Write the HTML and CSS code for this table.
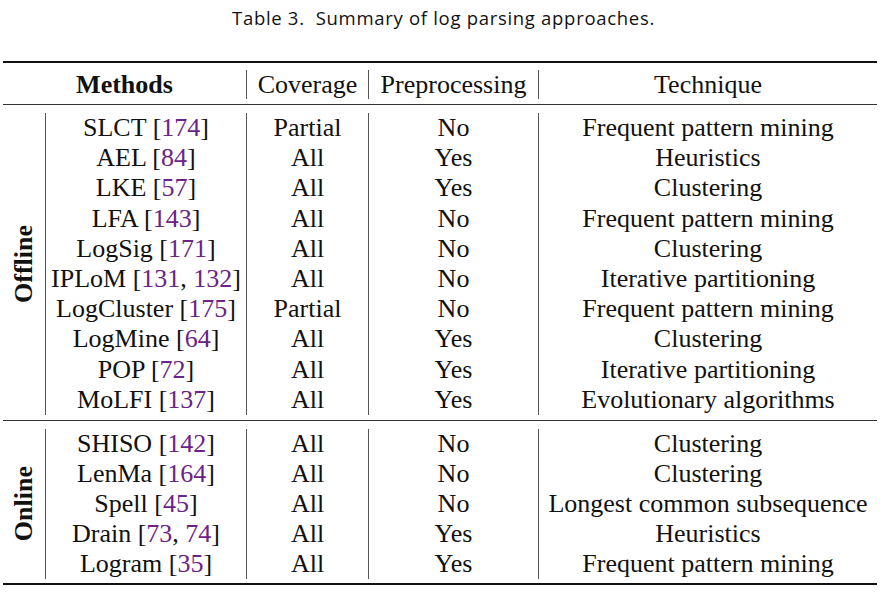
FILE: index.html
```html
<!DOCTYPE html>
<html>
<head>
<meta charset="utf-8">
<link rel="stylesheet" href="styles.css">
</head>
<body>
<div class="caption">Table 3.&nbsp; Summary of log parsing approaches.</div>
<table class="tbl">
  <colgroup>
    <col class="c0"><col class="c1"><col class="c2"><col class="c3"><col class="c4">
  </colgroup>
  <tr class="rule thick"><td colspan="5"></td></tr>
  <tr class="gap g7"><td colspan="5"></td></tr>
  <tr class="head">
    <th colspan="2" class="bold">Methods</th>
    <th class="vl">Coverage</th>
    <th class="vl">Preprocessing</th>
    <th class="vl">Technique</th>
  </tr>
  <tr class="gap g5"><td colspan="5"></td></tr>
  <tr class="rule thin"><td colspan="5"></td></tr>
  <tr class="gap g8"><td colspan="5"></td></tr>

  <tr class="row off">
    <td rowspan="10" class="grp"><div class="rot">Offline</div></td>
    <td class="vl">SLCT [<span class="ref">174</span>]</td><td class="vl">Partial</td><td class="vl">No</td><td class="vl">Frequent pattern mining</td>
  </tr>
  <tr class="row off"><td class="vl">AEL [<span class="ref">84</span>]</td><td class="vl">All</td><td class="vl">Yes</td><td class="vl">Heuristics</td></tr>
  <tr class="row off"><td class="vl">LKE [<span class="ref">57</span>]</td><td class="vl">All</td><td class="vl">Yes</td><td class="vl">Clustering</td></tr>
  <tr class="row off"><td class="vl">LFA [<span class="ref">143</span>]</td><td class="vl">All</td><td class="vl">No</td><td class="vl">Frequent pattern mining</td></tr>
  <tr class="row off"><td class="vl">LogSig [<span class="ref">171</span>]</td><td class="vl">All</td><td class="vl">No</td><td class="vl">Clustering</td></tr>
  <tr class="row off"><td class="vl">IPLoM [<span class="ref">131</span>, <span class="ref">132</span>]</td><td class="vl">All</td><td class="vl">No</td><td class="vl">Iterative partitioning</td></tr>
  <tr class="row off"><td class="vl">LogCluster [<span class="ref">175</span>]</td><td class="vl">Partial</td><td class="vl">No</td><td class="vl">Frequent pattern mining</td></tr>
  <tr class="row off"><td class="vl">LogMine [<span class="ref">64</span>]</td><td class="vl">All</td><td class="vl">Yes</td><td class="vl">Clustering</td></tr>
  <tr class="row off"><td class="vl">POP [<span class="ref">72</span>]</td><td class="vl">All</td><td class="vl">Yes</td><td class="vl">Iterative partitioning</td></tr>
  <tr class="row off"><td class="vl">MoLFI [<span class="ref">137</span>]</td><td class="vl">All</td><td class="vl">Yes</td><td class="vl">Evolutionary algorithms</td></tr>

  <tr class="gap g5"><td colspan="5"></td></tr>
  <tr class="rule thin"><td colspan="5"></td></tr>
  <tr class="gap g8"><td colspan="5"></td></tr>

  <tr class="row on">
    <td rowspan="5" class="grp"><div class="rot">Online</div></td>
    <td class="vl">SHISO [<span class="ref">142</span>]</td><td class="vl">All</td><td class="vl">No</td><td class="vl">Clustering</td>
  </tr>
  <tr class="row on"><td class="vl">LenMa [<span class="ref">164</span>]</td><td class="vl">All</td><td class="vl">No</td><td class="vl">Clustering</td></tr>
  <tr class="row on"><td class="vl">Spell [<span class="ref">45</span>]</td><td class="vl">All</td><td class="vl">No</td><td class="vl">Longest common subsequence</td></tr>
  <tr class="row on"><td class="vl">Drain [<span class="ref">73</span>, <span class="ref">74</span>]</td><td class="vl">All</td><td class="vl">Yes</td><td class="vl">Heuristics</td></tr>
  <tr class="row on"><td class="vl">Logram [<span class="ref">35</span>]</td><td class="vl">All</td><td class="vl">Yes</td><td class="vl">Frequent pattern mining</td></tr>

  <tr class="gap g4"><td colspan="5"></td></tr>
  <tr class="rule thick"><td colspan="5"></td></tr>
</table>
</body>
</html>
```
FILE: styles.css
```css
html, body {
  margin: 0;
  padding: 0;
  background: #fff;
}
body {
  color: #111;
}
.caption {
  font-family: "Open Sans", "Liberation Sans", sans-serif;
  font-size: 18.5px;
  letter-spacing: 0.7px;
  line-height: 22px;
  text-align: center;
  padding-top: 7px;
  height: 61px;
  box-sizing: border-box;
  color: #111;
}
.tbl {
  margin-left: 3px;
  border-collapse: separate;
  border-spacing: 0;
  table-layout: fixed;
  width: 874px;
  font-family: "Liberation Serif", "Times New Roman", serif;
  font-size: 26px;
}
.c0 { width: 42px; }
.c1 { width: 201px; }
.c2 { width: 122px; }
.c3 { width: 170px; }
.c4 { width: 339px; }
.tbl td, .tbl th {
  padding: 0;
  text-align: center;
  white-space: nowrap;
  font-weight: normal;
}
.rule td, .gap td {
  font-size: 0;
  line-height: 0;
}
.rule.thick td { height: 2px; background: #111; }
.rule.thin td { height: 1px; background: #333; }
.gap.g4 td { height: 4px; }
.gap.g5 td { height: 5px; }
.gap.g7 td { height: 7px; }
.gap.g8 td { height: 8px; }
.head th {
  height: 29px;
  line-height: 29px;
}
.head th.bold { font-weight: bold; }
.row td { line-height: 30px; }
.row.off td { height: 30.2px; }
.row.on td { height: 30px; }
.vl { border-left: 1px solid #555; }
.ref { color: #6b2387; }
.grp {
  font-weight: bold;
}
.rot {
  writing-mode: vertical-rl;
  transform: rotate(180deg);
  margin: 0 auto;
  line-height: 42px;
  font-weight: bold;
}
```
